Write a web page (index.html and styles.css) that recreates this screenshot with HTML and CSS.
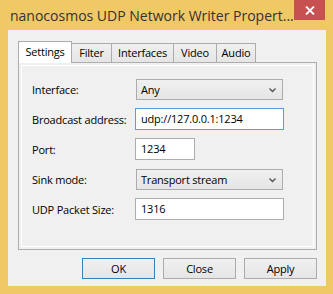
FILE: index.html
```html
<!DOCTYPE html>
<html lang="en">
<head>
    <meta charset="UTF-8">
    <title>nanocosmos UDP Network Writer Properties</title>
    <link rel="stylesheet" href="styles.css">
</head>
<body>
    <div class="window">
        <div class="titlebar">
            <span class="title">nanocosmos UDP Network Writer Propert...</span>
            <div class="close-btn">
                <svg width="10" height="9" viewBox="0 0 10 9"><path d="M1 0.5 L9 8.5 M9 0.5 L1 8.5" stroke="#fff" stroke-width="1.8" fill="none"/></svg>
            </div>
        </div>
        <div class="client">
            <div class="tabs">
                <div class="tab active tab-settings">Settings</div>
                <div class="tab tab-filter">Filter</div>
                <div class="tab tab-interfaces">Interfaces</div>
                <div class="tab tab-video">Video</div>
                <div class="tab tab-audio">Audio</div>
            </div>
            <div class="panel">
                <div class="page">
                    <div class="form">
                        <div class="label">Interface:</div>
                        <div class="combo">Any
                            <svg class="chevron" width="7" height="5" viewBox="0 0 7 5"><path d="M0.5 0.5 L3.5 3.5 L6.5 0.5" stroke="#555" stroke-width="1.4" fill="none"/></svg>
                        </div>

                        <div class="label">Broadcast address:</div>
                        <div class="edit focused">udp://127.0.0.1:1234</div>

                        <div class="label">Port:</div>
                        <div class="edit short">1234</div>

                        <div class="label">Sink mode:</div>
                        <div class="combo">Transport stream
                            <svg class="chevron" width="7" height="5" viewBox="0 0 7 5"><path d="M0.5 0.5 L3.5 3.5 L6.5 0.5" stroke="#555" stroke-width="1.4" fill="none"/></svg>
                        </div>

                        <div class="label">UDP Packet Size:</div>
                        <div class="edit">1316</div>
                    </div>
                </div>
            </div>
            <div class="buttons">
                <div class="btn default">OK</div>
                <div class="btn">Close</div>
                <div class="btn">Apply</div>
            </div>
        </div>
    </div>
</body>
</html>
```

FILE: styles.css
```css
body {
    margin: 0;
    padding: 0;
    font-family: "Open Sans", "Noto Sans", sans-serif;
    font-size: 11px;
    letter-spacing: -0.2px;
    color: #000;
}
.window {
    width: 333px;
    height: 294px;
    box-sizing: border-box;
    background-color: #f0c866;
    display: flex;
    flex-direction: column;
}
.titlebar {
    height: 30px;
    display: flex;
    align-items: flex-start;
    padding-left: 10px;
}
.title {
    flex: 1;
    font-size: 14px;
    letter-spacing: 0;
    line-height: 20px;
    margin-top: 6px;
    color: #333;
    white-space: nowrap;
}
.close-btn {
    width: 31px;
    height: 20px;
    margin-right: 8px;
    background-color: #c75050;
    display: flex;
    align-items: center;
    justify-content: center;
}
.client {
    flex: 1;
    margin: 0 7px 8px 8px;
    padding: 11px 9px 0 10px;
    background-color: #f0f0f0;
}
.tabs {
    display: flex;
    align-items: flex-end;
    height: 21px;
}
.tab {
    box-sizing: border-box;
    height: 19px;
    line-height: 18px;
    margin-left: -1px;
    border: 1px solid #acacac;
    border-bottom: none;
    background: linear-gradient(#f0f0f0, #e5e5e5);
    text-align: center;
}
.tab.active {
    height: 22px;
    line-height: 20px;
    margin-left: 0;
    margin-bottom: -1px;
    background: #fff;
    position: relative;
    z-index: 1;
}
.tab-settings { width: 54px; }
.tab-filter { width: 41px; }
.tab-interfaces { width: 63px; }
.tab-video { width: 44px; }
.tab-audio { width: 40px; }
.panel {
    box-sizing: border-box;
    height: 188px;
    border: 1px solid #adadad;
    padding: 2px;
}
.page {
    box-sizing: border-box;
    height: 100%;
    border: 1px solid #fff;
}
.form {
    display: grid;
    grid-template-columns: 103px auto;
    grid-auto-rows: 22px;
    row-gap: 8px;
    padding: 12px 0 0 10px;
    align-items: center;
}
.label {
    white-space: nowrap;
    padding-top: 1px;
}
.combo {
    box-sizing: border-box;
    width: 147px;
    height: 21px;
    margin-left: 1px;
    padding-left: 4px;
    border: 1px solid #acacac;
    background: linear-gradient(#f0f0f0, #e5e5e5);
    line-height: 19px;
    position: relative;
}
.chevron {
    position: absolute;
    right: 6px;
    top: 8px;
}
.edit {
    box-sizing: border-box;
    width: 149px;
    height: 22px;
    padding-left: 5px;
    border: 1px solid #abadb3;
    background-color: #fff;
    line-height: 20px;
}
.edit.short {
    width: 60px;
}
.edit.focused {
    border-color: #569de5;
}
.buttons {
    display: flex;
    justify-content: flex-end;
    gap: 8px;
    margin-top: 8px;
}
.btn {
    box-sizing: border-box;
    width: 73px;
    height: 21px;
    border: 1px solid #acacac;
    background: linear-gradient(#f0f0f0, #e5e5e5);
    text-align: center;
    line-height: 19px;
}
.btn.default {
    border-color: #3c7fb1;
}
```
